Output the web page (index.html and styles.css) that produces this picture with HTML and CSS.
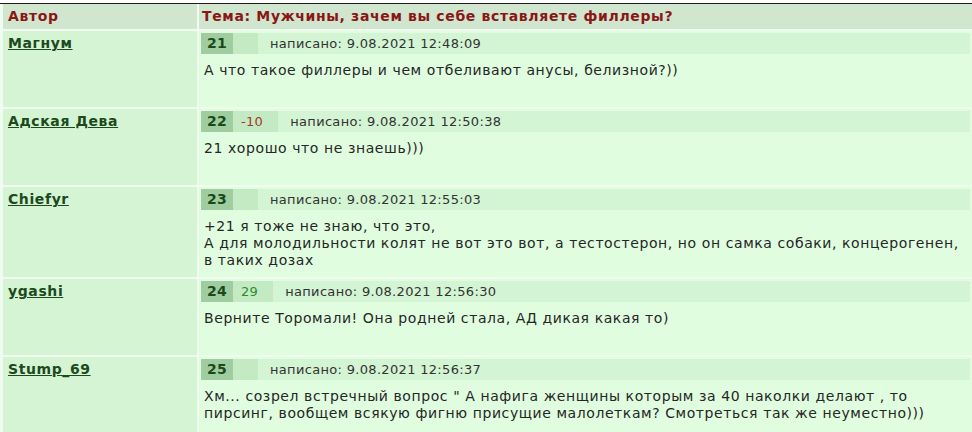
FILE: index.html
```html
<html>
    <head>
        <meta charset="utf-8">
        <link rel="stylesheet" href="styles.css">
    </head>
    <body>
        <div class="topic">
            <div class="head">Автор</div>
            <div class="head">Тема: Мужчины, зачем вы себе вставляете филлеры?</div>

            <div class="author"><a href="#">Магнум</a></div>
            <div class="post">
                <div class="post-bar">
                    <span class="num">21</span><span class="rating"></span>
                    <span class="date">написано: 9.08.2021 12:48:09</span>
                </div>
                <div class="text">А что такое филлеры и чем отбеливают анусы, белизной?))</div>
            </div>

            <div class="author"><a href="#">Адская Дева</a></div>
            <div class="post">
                <div class="post-bar">
                    <span class="num">22</span><span class="rating minus">-10</span>
                    <span class="date">написано: 9.08.2021 12:50:38</span>
                </div>
                <div class="text">21 хорошо что не знаешь)))</div>
            </div>

            <div class="author"><a href="#">Chiefyr</a></div>
            <div class="post">
                <div class="post-bar">
                    <span class="num">23</span><span class="rating"></span>
                    <span class="date">написано: 9.08.2021 12:55:03</span>
                </div>
                <div class="text">+21 я тоже не знаю, что это,<br>А для молодильности колят не вот это вот, а тестостерон, но он самка собаки, концерогенен,<br>в таких дозах</div>
            </div>

            <div class="author"><a href="#">ygashi</a></div>
            <div class="post">
                <div class="post-bar">
                    <span class="num">24</span><span class="rating plus">29</span>
                    <span class="date">написано: 9.08.2021 12:56:30</span>
                </div>
                <div class="text">Верните Торомали! Она родней стала, АД дикая какая то)</div>
            </div>

            <div class="author"><a href="#">Stump_69</a></div>
            <div class="post">
                <div class="post-bar">
                    <span class="num">25</span><span class="rating"></span>
                    <span class="date">написано: 9.08.2021 12:56:37</span>
                </div>
                <div class="text">Хм... созрел встречный вопрос " А нафига женщины которым за 40 наколки делают , то<br>пирсинг, вообщем всякую фигню присущие малолеткам? Смотреться так же неуместно)))</div>
            </div>
        </div>
    </body>
</html>
```

FILE: styles.css
```css
body {
    margin: 0;
    padding-top: 3px;
    background: #ffffff;
    font-family: "DejaVu Sans", Verdana, sans-serif;
    font-size: 14px;
    letter-spacing: 0.58px;
    color: #262626;
}
.topic {
    display: grid;
    grid-template-columns: 194px 1fr;
    gap: 2px;
    padding-left: 3px;
    border-top: 1px solid #1e1e1e;
    background: #effcef;
}
.head {
    height: 25px;
    padding: 0 5px;
    line-height: 25px;
    background: #d0e6ce;
    color: #8a1616;
    font-weight: bold;
    letter-spacing: 0.65px;
}
.head + .head {
    padding-left: 3px;
}
.author {
    padding: 4px 5px;
    line-height: 17px;
    background: #d4f4d4;
}
.author a {
    color: #1d4a1d;
    font-weight: bold;
    letter-spacing: 0.6px;
}
.post {
    padding: 2px 2px 0 2px;
    background: #e0fde0;
}
.post-bar {
    display: flex;
    align-items: center;
    height: 21px;
    background: #d3f5d3;
    font-size: 13px;
    letter-spacing: 0.32px;
}
.post-bar .num {
    width: 32px;
    height: 21px;
    line-height: 21px;
    text-align: center;
    background: #9fcd9f;
    color: #1a4a1a;
    font-size: 14px;
    font-weight: bold;
}
.post-bar .rating {
    min-width: 25px;
    height: 21px;
    box-sizing: border-box;
    padding: 0 15px 0 8px;
    line-height: 21px;
    background: #c4eac4;
}
.rating.minus {
    color: #a33a2a;
}
.rating.plus {
    color: #2f8a2f;
}
.post-bar .date {
    margin-left: 12px;
    color: #333333;
}
.text {
    min-height: 37px;
    padding: 8px 3px;
    line-height: 17px;
}
```
